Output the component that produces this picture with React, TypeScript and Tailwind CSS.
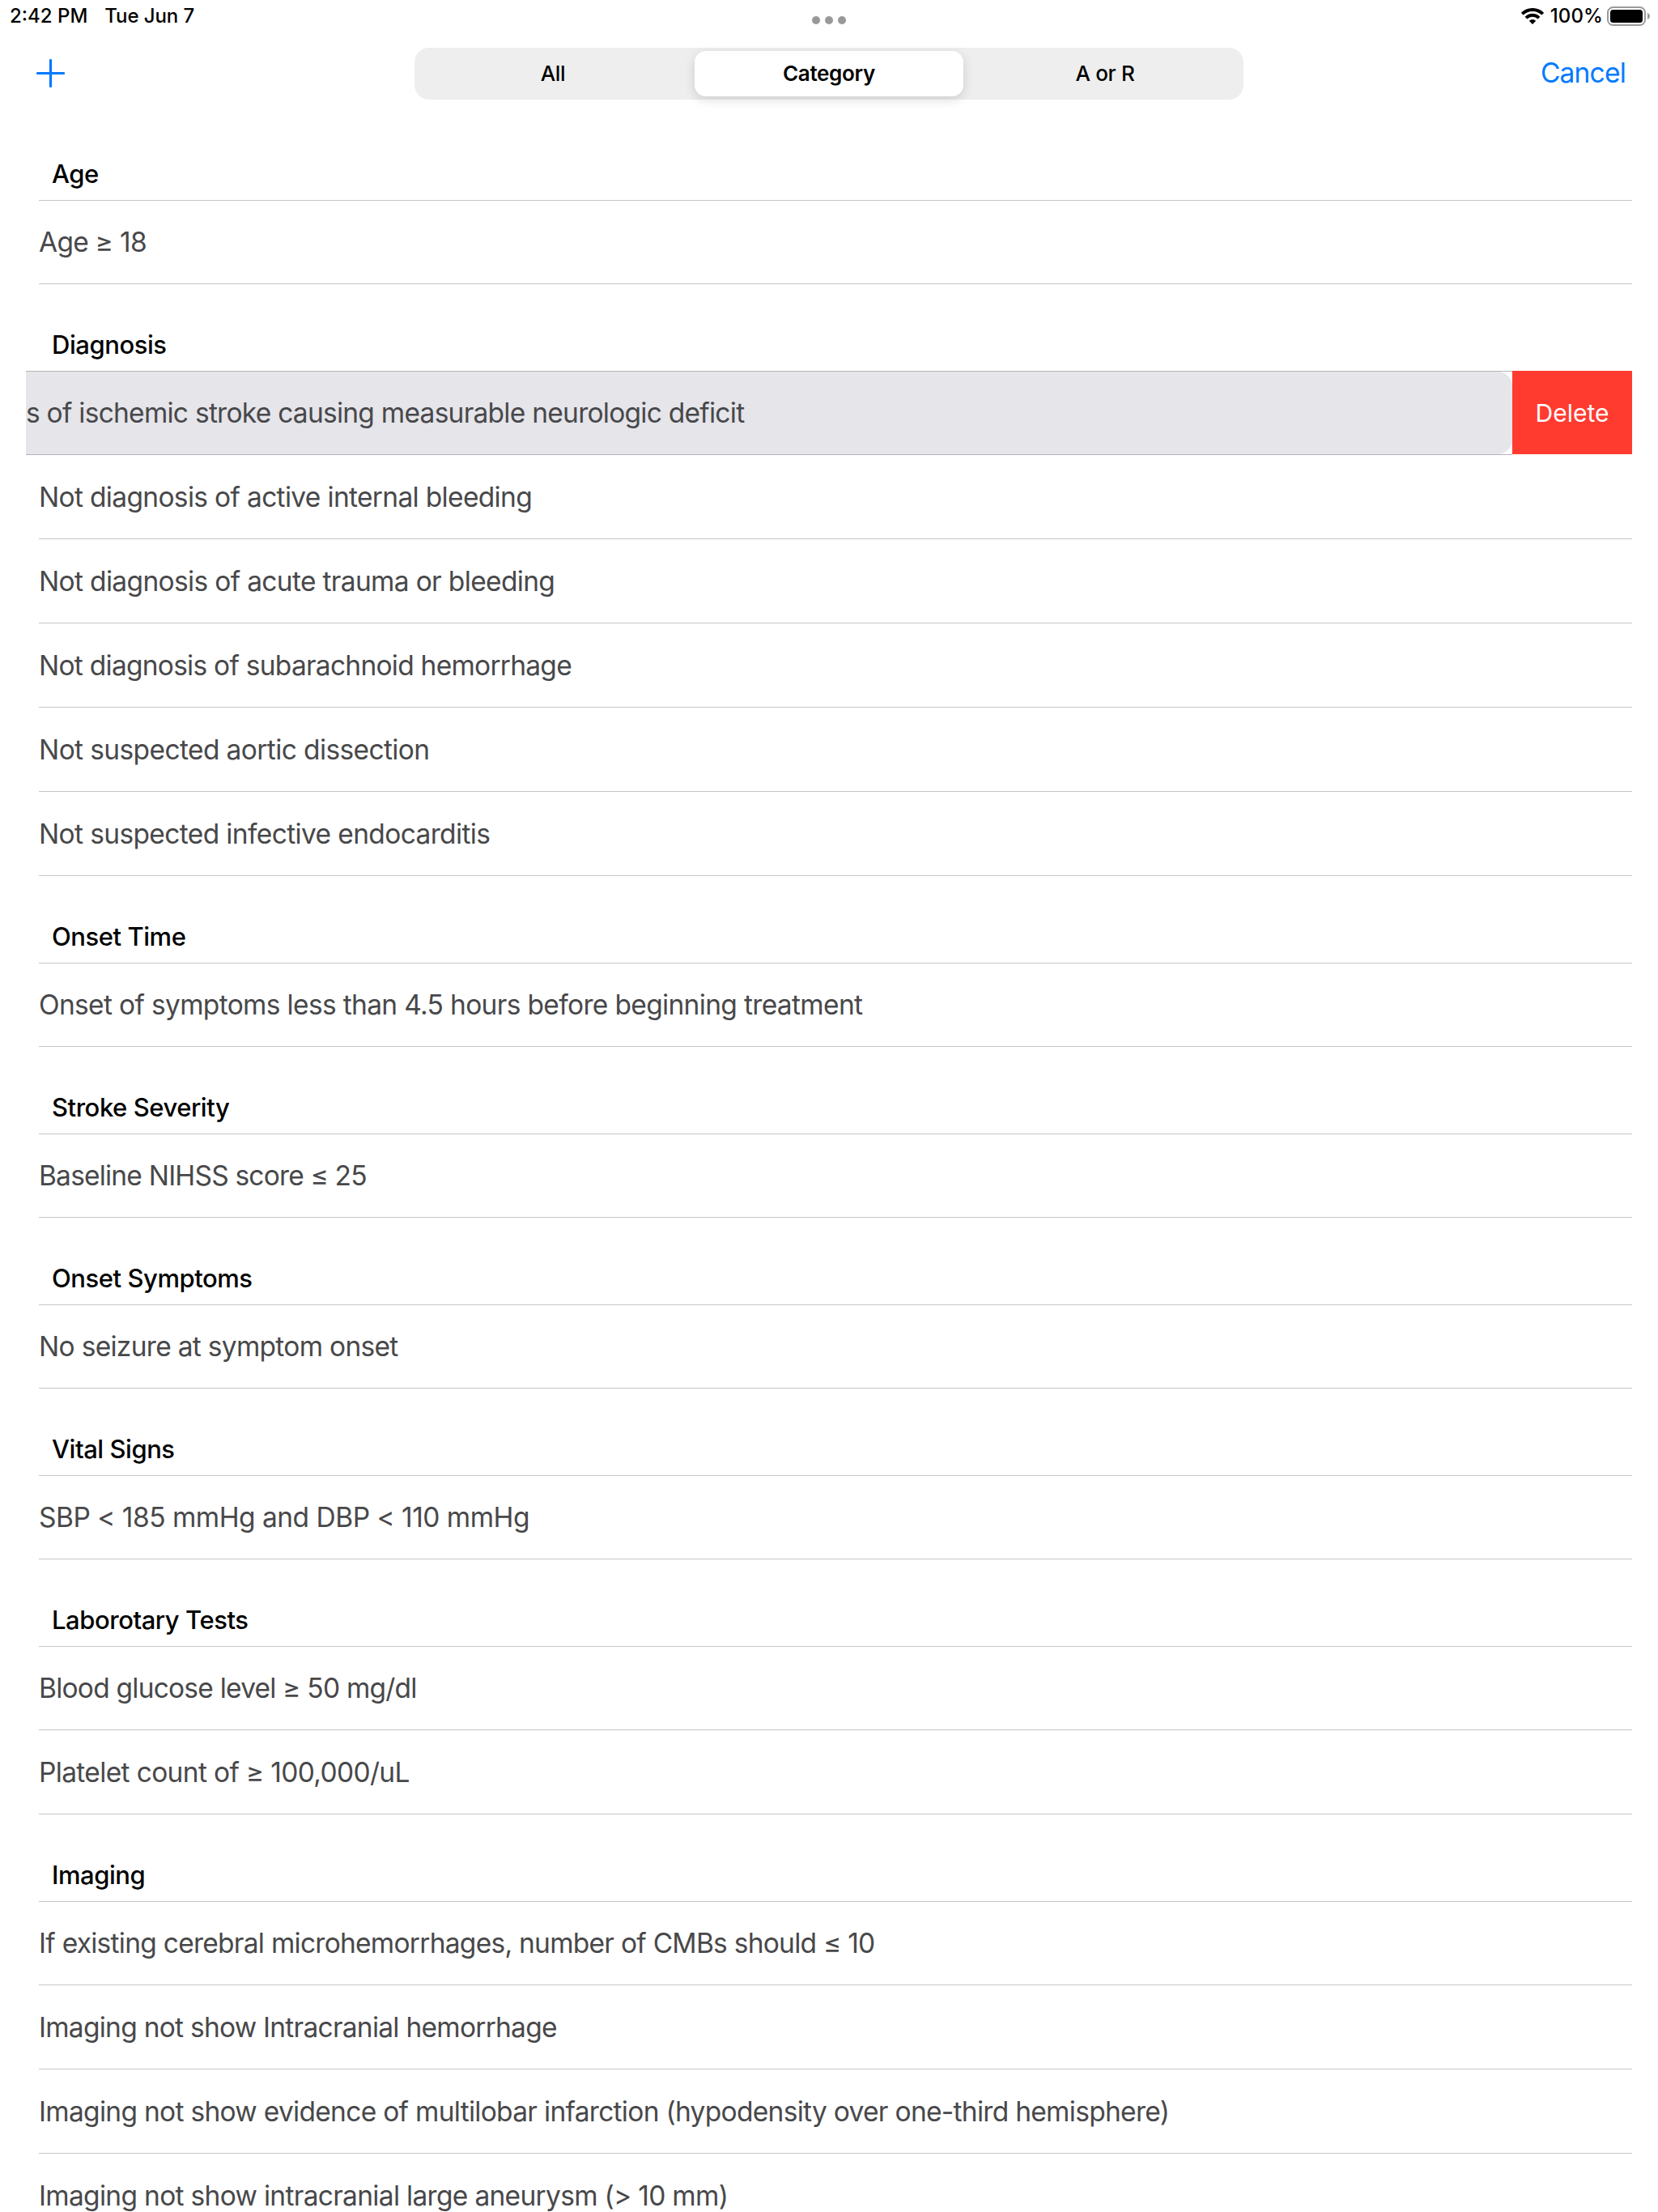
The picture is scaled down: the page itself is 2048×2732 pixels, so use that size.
import React, { useState } from 'react';

interface Criterion {
  label: string;
  tracking: string;
}

interface Section {
  title: string;
  items: Criterion[];
}

const SEGMENTS = ["All", "Category", "A or R"];

const SECTIONS: Section[] = [
  { title: "Age", items: [{ label: "Age ≥ 18", tracking: "tracking-[-0.7px]" }] },
  {
    title: "Diagnosis",
    items: [
      { label: "s of ischemic stroke causing measurable neurologic deficit", tracking: "tracking-[-0.74px]" },
      { label: "Not diagnosis of active internal bleeding", tracking: "tracking-[-0.67px]" },
      { label: "Not diagnosis of acute trauma or bleeding", tracking: "tracking-[-0.66px]" },
      { label: "Not diagnosis of subarachnoid hemorrhage", tracking: "tracking-[-0.74px]" },
      { label: "Not suspected aortic dissection", tracking: "tracking-[-0.61px]" },
      { label: "Not suspected infective endocarditis", tracking: "tracking-[-0.63px]" },
    ],
  },
  { title: "Onset Time", items: [{ label: "Onset of symptoms less than 4.5 hours before beginning treatment", tracking: "tracking-[-0.66px]" }] },
  { title: "Stroke Severity", items: [{ label: "Baseline NIHSS score ≤ 25", tracking: "tracking-[-0.8px]" }] },
  { title: "Onset Symptoms", items: [{ label: "No seizure at symptom onset", tracking: "tracking-[-0.7px]" }] },
  { title: "Vital Signs", items: [{ label: "SBP < 185 mmHg and DBP < 110 mmHg", tracking: "tracking-[-0.5px]" }] },
  {
    title: "Laborotary Tests",
    items: [
      { label: "Blood glucose level ≥ 50 mg/dl", tracking: "tracking-[-0.77px]" },
      { label: "Platelet count of ≥ 100,000/uL", tracking: "tracking-[-0.65px]" },
    ],
  },
  {
    title: "Imaging",
    items: [
      { label: "If existing cerebral microhemorrhages, number of CMBs should ≤ 10", tracking: "tracking-[-0.73px]" },
      { label: "Imaging not show Intracranial hemorrhage", tracking: "tracking-[-0.74px]" },
      { label: "Imaging not show evidence of multilobar infarction (hypodensity over one-third hemisphere)", tracking: "tracking-[-0.7px]" },
      { label: "Imaging not show intracranial large aneurysm (> 10 mm)", tracking: "tracking-[-0.69px]" },
    ],
  },
];

function StatusBar() {
  return (
    <div className="h-10 px-3 flex justify-between text-[24px] leading-[40px] font-medium">
      <div className="flex w-[400px] gap-[21px]">
        <span>2:42 PM</span>
        <span className="tracking-[-0.1px]">Tue Jun 7</span>
      </div>
      <div className="flex gap-[6px] pt-5">
        <span className="size-[10px] rounded-full bg-[#999999]" />
        <span className="size-[10px] rounded-full bg-[#999999]" />
        <span className="size-[10px] rounded-full bg-[#999999]" />
      </div>
      <div className="flex w-[400px] justify-end">
        <svg className="w-7 h-5 mt-[10px] mr-[8px]" viewBox="0 0 28 20" fill="none" stroke="black" strokeWidth="3.9">
          <path d="M1.2 7.2a18.2 18.2 0 0 1 25.6 0" />
          <path d="M6 12.1a11.4 11.4 0 0 1 16 0" />
          <path d="M14 20l-4.2-4.2a6 6 0 0 1 8.4 0z" fill="black" stroke="none" />
        </svg>
        <span className="mr-[5px] tracking-[0.1px]">100%</span>
        <svg className="w-[53px] h-6 mt-2 -mr-0.5" viewBox="0 0 53 24">
          <rect x="1" y="1" width="46" height="22" rx="6.5" fill="none" stroke="#9a9a9a" strokeWidth="2" />
          <rect x="4" y="4" width="40" height="16" rx="3.5" fill="black" />
          <path d="M50 8c1.8.7 3 2.200 3 4s-1.200 3.300-3 4z" fill="#9a9a9a" />
        </svg>
      </div>
    </div>
  );
}

export default function App() {
  const [segment, setSegment] = useState("Category");
  const [swiped, setSwiped] = useState<string | null>(SECTIONS[1].items[0].label);

  return (
    <div className="w-[2048px] h-[2732px] overflow-hidden bg-white text-black font-['Inter','Noto_Sans',sans-serif]">
      <StatusBar />

      <div className="h-[100px] flex items-start justify-between pl-[45px] pr-10">
        <button className="w-[150px] pt-[33px]">
          <svg className="size-[35px]" viewBox="0 0 35 35" stroke="#007aff" strokeWidth="3.2" strokeLinecap="round">
            <path d="M17.500 1.500v32M1.500 17.500h32" />
          </svg>
        </button>
        <div className="mt-[19px] w-[1024px] h-16 rounded-[18px] bg-[#eeeeee] flex items-center">
          {SEGMENTS.map((name) => (
            <button
              key={name}
              onClick={() => setSegment(name)}
              className={
                name === segment
                  ? "mx-1 w-[332px] h-14 pb-0.5 rounded-[14px] bg-white shadow-[0_4px_14px_rgba(0,0,0,0.14)] text-[26px] font-semibold tracking-[-0.3px]"
                  : "w-[342px] h-14 pb-0.5 text-[26px] font-medium tracking-[-0.3px]"
              }
            >
              {name}
            </button>
          ))}
        </div>
        <button className="w-[155px] mt-[18px] h-16 text-right text-[33.5px] text-[#007aff] tracking-[-0.8px]">Cancel</button>
      </div>

      <div className="ml-12 mr-8">
        {SECTIONS.map((section) => (
          <section key={section.title}>
            <h2 className="h-[108px] pl-4 pb-3 flex items-end border-b border-[#c6c6c8] text-[31px] leading-[40px] font-medium tracking-[-0.45px]">
              {section.title}
            </h2>
            {section.items.map((item, i) =>
              item.label === swiped ? (
                <div key={item.label} className="-ml-4 -mt-px h-[104px] flex whitespace-nowrap">
                  <div className="flex-1 border-y border-[#b4b4b9]">
                    <div className="h-full pt-px rounded-r-[18px] bg-[#e5e5ea] flex items-center text-[33.5px] text-[#48484a]">
                      <span className={item.tracking}>{item.label}</span>
                    </div>
                  </div>
                  <button
                    onClick={() => setSwiped(null)}
                    className="w-[148px] h-[103px] pt-0.5 bg-[#ff3b30] text-white text-[30px]"
                  >
                    Delete
                  </button>
                </div>
              ) : (
                <div
                  key={item.label}
                  className={`${i === 0 ? "h-[103px]" : "h-[104px] pt-0.5"} flex items-center whitespace-nowrap border-b border-[#c6c6c8] text-[33.5px] text-[#48484a]`}
                >
                  <span className={item.tracking}>{item.label}</span>
                </div>
              )
            )}
          </section>
        ))}
      </div>
    </div>
  );
}
